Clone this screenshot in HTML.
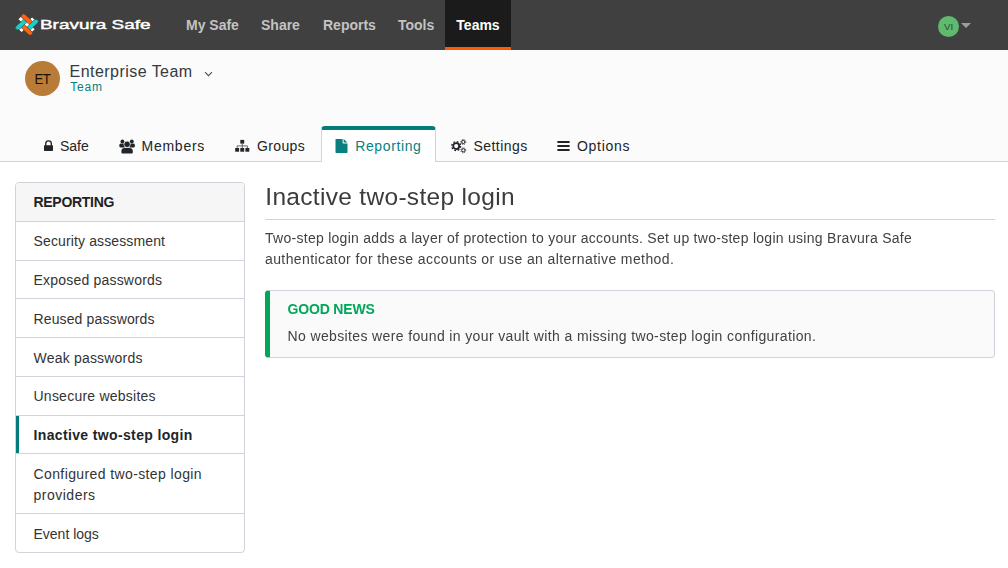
<!DOCTYPE html>
<html lang="en">
<head>
<meta charset="utf-8">
<title>Bravura Safe - Inactive two-step login</title>
<style>
*{box-sizing:border-box;margin:0;padding:0}
html,body{width:1008px;height:568px;overflow:hidden;background:#fff}
body{font-family:"Liberation Sans",Arial,sans-serif;font-size:14px;line-height:21px;color:#333;position:relative}
a{color:inherit;text-decoration:none}
ul{list-style:none}
span.t{display:inline-block;white-space:nowrap}

/* top navbar */
.navbar{position:absolute;left:0;top:0;width:1008px;height:50px;background:#404040}
.brand{position:absolute;left:15px;top:13px;width:140px;height:24px}
.brand svg{position:absolute;left:0;top:0}
.brand .word{position:absolute;left:24.5px;top:.9px;height:21px;line-height:21px;font-weight:400;-webkit-text-stroke:.42px #fff;font-size:13.1px;color:#fff;white-space:nowrap;transform-origin:0 50%;transform:scaleX(1.445)}
.nav{position:absolute;left:0;top:0;height:50px}
.nav a{position:absolute;top:0;height:50px;line-height:50px;font-weight:700;font-size:14px;color:#c3c3c3;white-space:nowrap}
.nav a.active{background:#1b1b1b;color:#fff;border-bottom:3px solid #ff5a00;text-align:center}
.user{position:absolute;left:938px;top:16px;width:21px;height:21px;border-radius:50%;background:#5fb96f;color:#27522d;font-size:9.8px;line-height:21px;text-align:center;letter-spacing:-.1px}
.caret{position:absolute;left:961px;top:22.8px;width:0;height:0;border-left:5px solid transparent;border-right:5px solid transparent;border-top:5.6px solid #9d9d9d}

/* org header */
.orgbar{position:absolute;left:0;top:50px;width:1008px;height:112px;background:#fbfbfb;border-bottom:1px solid #ced4da}
.avatar{position:absolute;left:25px;top:11px;width:35px;height:35px;border-radius:50%;background:#b97b38;color:#1c0e02;font-size:15px;line-height:35px;text-align:center}
.avatar span{display:inline-block;transform:scaleX(.845);letter-spacing:-.4px;position:relative;left:.2px;top:0px;font-size:15.5px}
.orgname{position:absolute;left:69.5px;top:11.2px;font-size:16px;line-height:22px;color:#343a40;white-space:nowrap;letter-spacing:.46px}
.orgtype{position:absolute;left:70.3px;top:28.5px;font-size:12px;line-height:16px;color:#0a8080;white-space:nowrap;letter-spacing:.8px}
.chev{position:absolute;left:204px;top:20px}
.tabs{position:absolute;left:0;top:76px;height:36px;width:1008px}
.tabs a{position:absolute;top:0;height:36px;line-height:21px;color:#212529;white-space:nowrap}
.tabs a svg{position:absolute}
.tabs a span{position:absolute;top:9.7px}
.tabs a.active{background:#fff;border:1px solid #ced4da;border-top:4px solid #037c7c;border-bottom:0;border-radius:4px 4px 0 0;color:#0a7f80}

/* sidebar */
.card{position:absolute;left:15px;top:182px;width:230px;border:1px solid #ced4da;border-radius:4px;background:#fff;overflow:hidden}
.card-header{height:39px;padding:8.75px 17.5px;background:#f6f6f6;border-bottom:1px solid #ced4da;font-weight:700;color:#222}
.card li{height:39px;padding:9px 17.5px 0;border-bottom:1px solid #ced4da;line-height:21px;position:relative}
.card li.h38{height:38px}
.card li.h60{height:60px;padding-top:10px}
.card li.pt10{padding-top:10px}
.card li:last-child{border-bottom:0}
.card li.active{font-weight:700;color:#212529}
.card li.active:before{content:"";position:absolute;left:0;top:0;bottom:0;width:3px;background:#037c7c}

/* main */
.main{position:absolute;left:265px;top:182px;width:730px;will-change:transform}
.main h1{font-weight:400;font-size:24.5px;line-height:29px;color:#3c3c3c;height:37.5px;border-bottom:1px solid #ced4da;white-space:nowrap}
.main p{margin-top:8.5px;line-height:21px;color:#424242}
.callout{position:absolute;left:0;top:108px;width:730px;height:67.5px;background:#fafafa;border:1px solid #ced4da;border-left:5px solid #00a65a;border-radius:4px;padding:7px 17.5px;color:#424242}
.callout h3{font-size:14px;font-weight:700;color:#00a65a;line-height:21px;margin-bottom:7px;position:relative;top:.5px}
</style>
</head>
<body>
<header class="navbar">
  <a class="brand" href="#">
    <svg width="24" height="24" viewBox="-12 -12 24 24">
      <g transform="translate(-0.1,-0.4) scale(0.97,0.9) rotate(45)">
        <path d="M-10.4,-1.9 H-1.9 V-9.4 H1.9 V-1.9 H9.4 V1.9 H1.9 V9.6 H-1.9 V1.9 H-10.4Z" fill="#fff"/>
        <g stroke="#404040" stroke-width="0.55">
          <path d="M-9,-6.6 H1.8 V-1.8 H-9 A2.4,2.4 0 0 1 -9,-6.6Z" fill="#ff6310"/>
          <path d="M6.6,-9 V1.8 H1.8 V-9 A2.4,2.4 0 0 1 6.6,-9Z" fill="#18d0ca"/>
          <path d="M9,6.6 H-1.8 V1.8 H9 A2.4,2.4 0 0 1 9,6.6Z" fill="#ff6310"/>
          <path d="M-6.6,9 V-1.8 H-1.8 V9 A2.4,2.4 0 0 1 -6.6,9Z" fill="#18d0ca"/>
        </g>
      </g>
    </svg>
    <span class="word">Bravura Safe</span>
  </a>
  <nav class="nav">
    <a href="#" style="left:186px">My Safe</a>
    <a href="#" style="left:261px">Share</a>
    <a href="#" style="left:323px">Reports</a>
    <a href="#" style="left:398px">Tools</a>
    <a href="#" class="active" style="left:445px;width:66px">Teams</a>
  </nav>
  <div class="user">VI</div>
  <div class="caret"></div>
</header>

<section class="orgbar">
  <div class="avatar"><span>ET</span></div>
  <div class="orgname">Enterprise Team</div>
  <div class="orgtype">Team</div>
  <svg class="chev" width="9" height="8" viewBox="0 0 9 8"><path d="M1 2.2 L4.5 5.7 L8 2.2" fill="none" stroke="#4a4f54" stroke-width="1.1"/></svg>
  <nav class="tabs">
    <a href="#" style="left:30px;width:72px">
      <svg style="left:14px;top:13px" width="10" height="13" viewBox="0 0 10 13"><path d="M1.75 7 V4.6 A2.8 2.8 0 0 1 7.35 4.6 V7" fill="none" stroke="#212529" stroke-width="1.35"/><rect x="0" y="6.3" width="9" height="5.6" rx="0.7" fill="#212529"/></svg>
      <span style="left:30px">Safe</span>
    </a>
    <a href="#" style="left:104px;width:116px">
      <svg style="left:14.5px;top:12.5px" width="16" height="15" viewBox="0 0 16 15"><g fill="#212529"><circle cx="3.4" cy="2.4" r="1.9"/><circle cx="12.8" cy="2.4" r="1.9"/><rect x="0.3" y="4.6" width="6" height="3.8" rx="1.5"/><rect x="9.9" y="4.6" width="6" height="3.8" rx="1.5"/><circle cx="8.1" cy="5.3" r="3.2" stroke="#fbfbfb" stroke-width="0.7"/><path d="M2.4 13.4 V12.2 A3.2 3.2 0 0 1 5.6 9 H10.6 A3.2 3.2 0 0 1 13.8 12.2 V13.4 A1 1 0 0 1 12.8 14.4 H3.4 A1 1 0 0 1 2.4 13.4Z"/></g></svg>
      <span style="left:37.5px;letter-spacing:.75px">Members</span>
    </a>
    <a href="#" style="left:222px;width:98px">
      <svg style="left:13px;top:13px" width="15" height="14" viewBox="0 0 15 14"><g fill="#212529"><rect x="5.3" y="0.9" width="3.9" height="3.7"/><rect x="0.2" y="9" width="3.9" height="3.7"/><rect x="5.3" y="9" width="3.9" height="3.7"/><rect x="10.4" y="9" width="3.9" height="3.7"/></g><path d="M7.25 4.4 V9.1 M2.15 9.1 V6.9 H12.35 V9.1" fill="none" stroke="#555a5f" stroke-width="0.9"/></svg>
      <span style="left:35px;letter-spacing:.35px">Groups</span>
    </a>
    <a href="#" class="active" style="left:321px;width:115px">
      <svg style="left:13px;top:9px" width="13" height="15" viewBox="0 0.6 13 15"><path d="M0.5 1.2 A0.7 0.7 0 0 1 1.2 0.5 H7.6 V4.3 A0.7 0.7 0 0 0 8.3 5 H12.5 V13.8 A0.7 0.7 0 0 1 11.8 14.5 H1.2 A0.7 0.7 0 0 1 0.5 13.8Z M8.6 0.6 L12.4 4 H8.6Z" fill="#0a7f80"/></svg>
      <span style="left:33.2px;top:5.7px;letter-spacing:.62px">Reporting</span>
    </a>
    <a href="#" style="left:438px;width:104px">
      <svg style="left:13px;top:13px" width="17" height="15" viewBox="0 0 17 15"><g fill="none" stroke="#212529"><circle cx="5.2" cy="7.1" r="3" stroke-width="1.8"/><circle cx="5.2" cy="7.1" r="4.4" stroke-width="1.4" stroke-dasharray="1.75 1.706"/><circle cx="12.3" cy="3" r="1.6" stroke-width="1"/><circle cx="12.3" cy="3" r="2.5" stroke-width="0.9" stroke-dasharray="1 0.963"/><circle cx="12.3" cy="11.3" r="1.6" stroke-width="1"/><circle cx="12.3" cy="11.3" r="2.5" stroke-width="0.9" stroke-dasharray="1 0.963"/></g></svg>
      <span style="left:35.5px;letter-spacing:.45px">Settings</span>
    </a>
    <a href="#" style="left:544px;width:100px">
      <svg style="left:13px;top:15px" width="13" height="11" viewBox="0 0 13 11"><path d="M0.4 1 H12.6 M0.4 5 H12.6 M0.4 9 H12.6" stroke="#212529" stroke-width="2" fill="none"/></svg>
      <span style="left:33px;letter-spacing:.72px">Options</span>
    </a>
  </nav>
</section>

<aside class="card">
  <div class="card-header"><span style="letter-spacing:-.3px">REPORTING</span></div>
  <ul>
    <li><a href="#" style="letter-spacing:.13px">Security assessment</a></li>
    <li class="h38"><a href="#" style="letter-spacing:.2px">Exposed passwords</a></li>
    <li class="pt10"><a href="#" style="letter-spacing:.13px">Reused passwords</a></li>
    <li class="pt10"><a href="#" style="letter-spacing:.2px">Weak passwords</a></li>
    <li><a href="#" style="letter-spacing:.24px">Unsecure websites</a></li>
    <li class="active h38"><a href="#" style="letter-spacing:.36px">Inactive two-step login</a></li>
    <li class="h60"><a href="#"><span style="letter-spacing:.39px">Configured two-step login</span><br><span style="letter-spacing:.5px">providers</span></a></li>
    <li class="h38 pt10"><a href="#">Event logs</a></li>
  </ul>
</aside>

<main class="main">
  <h1><span style="letter-spacing:.31px;margin-left:.3px">Inactive two-step login</span></h1>
  <p><span style="letter-spacing:.276px">Two-step login adds a layer of protection to your accounts. Set up two-step login using Bravura Safe</span><br><span style="letter-spacing:.4px">authenticator for these accounts or use an alternative method.</span></p>
  <div class="callout">
    <h3><span style="letter-spacing:-.17px">GOOD NEWS</span></h3>
    <div style="letter-spacing:.37px">No websites were found in your vault with a missing two-step login configuration.</div>
  </div>
</main>
</body>
</html>
